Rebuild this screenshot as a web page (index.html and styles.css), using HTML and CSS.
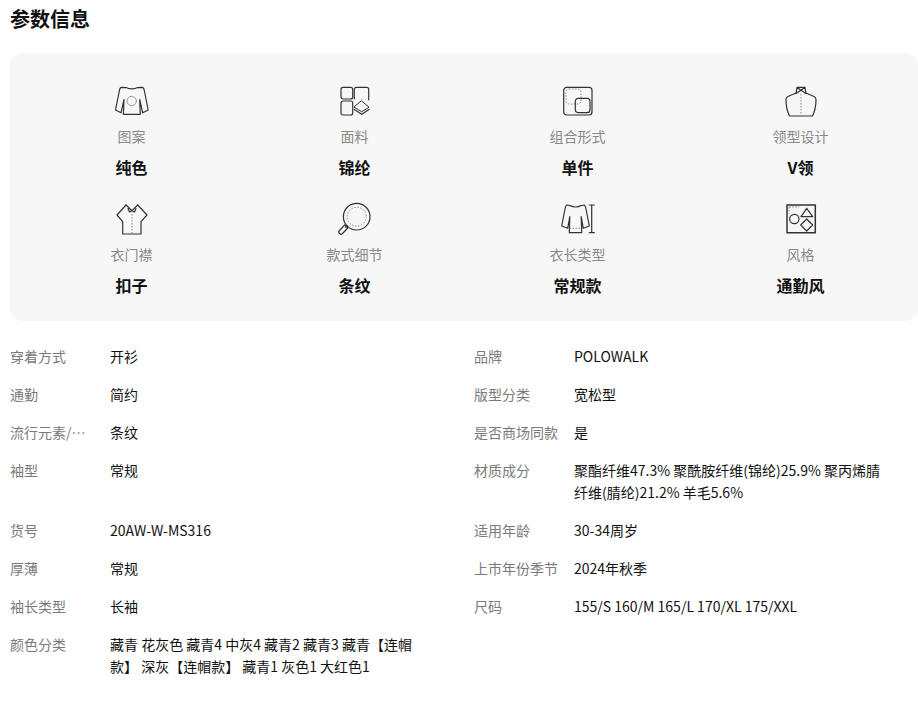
FILE: index.html
```html
<!DOCTYPE html>
<html lang="zh">
<head><meta charset="utf-8"><title>参数信息</title><link rel="stylesheet" href="styles.css"></head>
<body>
<h2 class="title">参数信息</h2>
<section class="cards">
  <div class="card"><svg class="ico" viewBox="0 0 34 34"><path d="M11.500 3.600 6.500 3.300C5.300 3.300 4.800 4.200 4.400 6.500L.5 26 6 28.800 9 15.500 8.400 30.300H25.300L24.700 15.500 27.700 28.800 33.200 26 29.300 6.500C28.900 4.200 28.400 3.300 27.200 3.300L22.200 3.600C20.500 5.300 13.200 5.300 11.500 3.600Z"/><circle class="grey" cx="16.700" cy="17" r="4.700"/></svg><div class="lab">图案</div><div class="val">纯色</div></div>
  <div class="card"><svg class="ico" viewBox="0 0 34 34"><rect x="3" y="3.300" width="11.700" height="11.700" rx="2"/><rect x="3" y="17" width="11.700" height="14" rx="2"/><path d="M16.300 15V5.300a2 2 0 0 1 2-2h10.400a2 2 0 0 1 2 2v10.500"/><path class="thin" d="m23.700 17 7.400 6.300-7.400 4.400-7.400-4.400Z"/><path d="m16.300 25.500 7.400 4.800 7.400-4.800"/></svg><div class="lab">面料</div><div class="val">锦纶</div></div>
  <div class="card"><svg class="ico" viewBox="0 0 34 34"><rect x="2.700" y="3.300" width="28.300" height="27.700" rx="3"/><rect class="dash" x="5" y="5" width="15" height="15" rx="3"/><rect x="14.300" y="14.300" width="14.700" height="14.400" rx="3"/></svg><div class="lab">组合形式</div><div class="val">单件</div></div>
  <div class="card"><svg class="ico" viewBox="0 0 34 34"><path d="M12 9 4 12.500C2.700 13.200 2 14 2 15.500 2 22 3.500 28 5.500 32H28.500C30.500 28 32 22 32 15.500 32 14 31.300 13.200 30 12.500L22 9"/><path d="M13 3.300 12 9.600 17 6.300l5 3.300-1-6.300ZM13 3.300 17 6.300 21 3.300"/><path class="dash" d="M17 10v22"/></svg><div class="lab">领型设计</div><div class="val">V领</div></div>
  <div class="card"><svg class="ico" viewBox="0 0 34 34"><path d="M11 3 2 13l5.700 6.700V32H26V19.700L32 13 22.700 3"/><path d="M11 3 17 8.700 22.700 3M13 6.500 14.500 10 17 8.700 19.500 10 21 6.500"/><path class="dash" d="M17 9v23"/></svg><div class="lab">衣门襟</div><div class="val">扣子</div></div>
  <div class="card"><svg class="ico" viewBox="0 0 34 34"><circle cx="18.700" cy="14.700" r="13.300"/><circle class="dash" cx="18.700" cy="14.700" r="9.500"/><path d="M9.500 23.700 7.500 25.200M6.800 22.800 1.500 28.500a2 2 0 0 0 3 3L9.800 26Z"/></svg><div class="lab">款式细节</div><div class="val">条纹</div></div>
  <div class="card"><svg class="ico" viewBox="0 0 34 34"><path d="M9.800 3.800 6 3C5 3 4.500 4 4 7L.7 24l6 2.300L8.800 14.500 8.300 30.700H20.700L20.200 14.500l2.100 11.800 6-2.300L25 7C24.500 4 24 3 23 3L19.200 3.800C17.500 5.400 11.500 5.400 9.800 3.800Z"/><path class="dash" d="M8.500 26.300h12"/><path d="M30.700 3v27.700M28.300 3h5M28.300 30.700h5"/></svg><div class="lab">衣长类型</div><div class="val">常规款</div></div>
  <div class="card"><svg class="ico" viewBox="0 0 34 34"><rect class="thick" x="3" y="3" width="28.300" height="27.700"/><path class="dash" d="M5.300 4.900h10M5 5v7"/><circle cx="10.300" cy="17" r="4.700"/><path d="M22.700 6.300 28.700 14.700H17ZM22.700 17l6 6-6 6-6-6Z"/></svg><div class="lab">风格</div><div class="val">通勤风</div></div>
</section>
<section class="params">
  <div class="row"><span class="k">穿着方式</span><span class="v">开衫</span></div>
  <div class="row"><span class="k">品牌</span><span class="v">POLOWALK</span></div>
  <div class="row"><span class="k">通勤</span><span class="v">简约</span></div>
  <div class="row"><span class="k">版型分类</span><span class="v">宽松型</span></div>
  <div class="row"><span class="k">流行元素/…</span><span class="v">条纹</span></div>
  <div class="row"><span class="k">是否商场同款</span><span class="v">是</span></div>
  <div class="row"><span class="k">袖型</span><span class="v">常规</span></div>
  <div class="row"><span class="k">材质成分</span><span class="v">聚酯纤维47.3% 聚酰胺纤维(锦纶)25.9% 聚丙烯腈纤维(腈纶)21.2% 羊毛5.6%</span></div>
  <div class="row"><span class="k">货号</span><span class="v">20AW-W-MS316</span></div>
  <div class="row"><span class="k">适用年龄</span><span class="v">30-34周岁</span></div>
  <div class="row"><span class="k">厚薄</span><span class="v">常规</span></div>
  <div class="row"><span class="k">上市年份季节</span><span class="v">2024年秋季</span></div>
  <div class="row"><span class="k">袖长类型</span><span class="v">长袖</span></div>
  <div class="row"><span class="k">尺码</span><span class="v">155/S 160/M 165/L 170/XL 175/XXL</span></div>
  <div class="row"><span class="k">颜色分类</span><span class="v">藏青 花灰色 藏青4 中灰4 藏青2 藏青3 藏青【连帽款】 深灰【连帽款】 藏青1 灰色1 大红色1</span></div>
</section>
</body>
</html>
```
FILE: styles.css
```css
* { box-sizing: border-box; }
html, body { margin: 0; }
body { width: 918px; height: 704px; overflow: hidden; padding: 6px 0 0 10px; background: #fff; color: #111; font-family: "Noto Sans CJK SC", "Noto Sans", sans-serif; }
.title { margin: 0 0 21px; font-size: 20px; line-height: 26px; font-weight: 700; color: #111; }
.cards { width: 908px; height: 268px; padding: 31px 0 0 10px; background: #f7f7f7; border-radius: 12px; display: grid; grid-template-columns: repeat(4, 223px); justify-content: start; grid-auto-rows: 118px; }
.card { display: flex; flex-direction: column; align-items: center; }
.ico { width: 34px; height: 34px; fill: none; stroke: #333; stroke-width: 1.200; stroke-linejoin: round; stroke-linecap: round; margin-bottom: 7px; }
.ico .thin { stroke-width: 1; }
.ico .thick { stroke-width: 1.500; }
.ico .grey { stroke: #999; stroke-width: 1; }
.ico .dash { stroke: #888; stroke-width: 1; stroke-dasharray: 1.500 1.500; stroke-linecap: butt; }
.lab { font-size: 14px; line-height: 22px; color: #888; }
.val { margin-top: 9px; font-size: 16px; line-height: 22px; font-weight: 700; color: #111; }
.params { margin-top: 24px; display: grid; grid-template-columns: 464px 444px; }
.row { display: flex; font-size: 14px; line-height: 22px; margin-bottom: 16px; align-self: start; }
.k { width: 100px; flex: none; color: #7a7a7a; }
.v { width: 310px; color: #111; }
```
